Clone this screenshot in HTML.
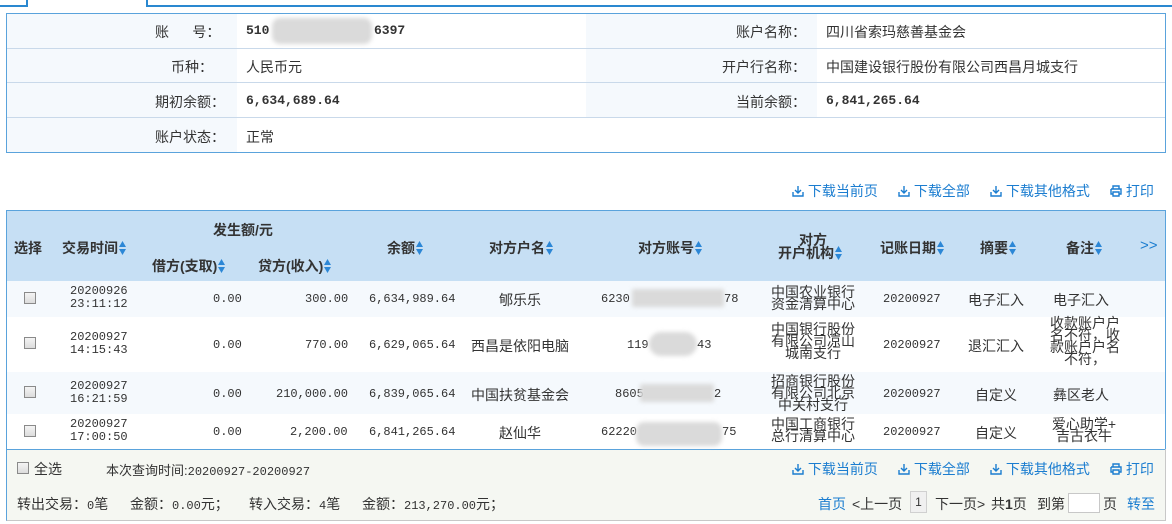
<!DOCTYPE html>
<html><head><meta charset="utf-8"><style>
*{margin:0;padding:0;box-sizing:border-box}
body{width:1172px;height:524px;background:#fff;position:relative;overflow:hidden;font-family:"Liberation Sans","Noto Sans CJK SC",sans-serif;font-size:14px;color:#333}
.a{position:absolute;white-space:nowrap}
.m{font-family:"Liberation Mono","Noto Sans CJK SC",monospace;font-size:12px}
.mb{font-family:"Liberation Mono",monospace;font-size:13px;font-weight:bold}
.b{font-weight:bold}
.lk{color:#1b7dd0}
.blur{position:absolute;background:#dadada;border-radius:8px;filter:blur(2px)}
.cb{position:absolute;width:12px;height:12px;border:1px solid #8a8a8a;background:linear-gradient(#f4f4f4,#dcdcdc)}
.t2{line-height:12px;text-align:center;font-size:14px}
.sa{display:inline-block;width:7px;height:14px;vertical-align:-2px;margin-left:1px}
</style></head><body>
<div class="a" style="left:0;top:5px;width:27px;height:2px;background:#2a88d0"></div>
<div class="a" style="left:26px;top:0;width:2px;height:7px;background:#2a88d0"></div>
<div class="a" style="left:146px;top:0;width:2px;height:7px;background:#2a88d0"></div>
<div class="a" style="left:146px;top:5px;width:1026px;height:2px;background:#2a88d0"></div>
<div class="a" style="left:6px;top:13px;width:1160px;height:140px;border:1px solid #5aa3dc"></div>
<div class="a" style="left:7px;top:14px;width:230px;height:138px;background:#f5f9fd"></div>
<div class="a" style="left:586px;top:14px;width:231px;height:104px;background:#f5f9fd"></div>
<div class="a" style="left:7px;top:48px;width:1158px;height:1px;background:#c9d9ea"></div>
<div class="a" style="left:7px;top:82px;width:1158px;height:1px;background:#c9d9ea"></div>
<div class="a" style="left:7px;top:117px;width:1158px;height:1px;background:#c9d9ea"></div>
<div class="a" style="left:155px;top:22px">账&nbsp;&nbsp;&nbsp;&nbsp;&nbsp;&nbsp;号：</div>
<div class="a mb" style="left:246px;top:23px">510</div>
<div class="blur" style="left:272px;top:18px;width:100px;height:26px"></div>
<div class="a mb" style="left:374px;top:23px">6397</div>
<div class="a" style="left:171px;top:57px">币种：</div>
<div class="a" style="left:246px;top:57px">人民币元</div>
<div class="a" style="left:155px;top:92px">期初余额：</div>
<div class="a mb" style="left:246px;top:93px">6,634,689.64</div>
<div class="a" style="left:155px;top:127px">账户状态：</div>
<div class="a" style="left:246px;top:127px">正常</div>
<div class="a" style="left:736px;top:22px">账户名称：</div>
<div class="a" style="left:826px;top:22px">四川省索玛慈善基金会</div>
<div class="a" style="left:722px;top:57px">开户行名称：</div>
<div class="a" style="left:826px;top:57px">中国建设银行股份有限公司西昌月城支行</div>
<div class="a" style="left:736px;top:92px">当前余额：</div>
<div class="a mb" style="left:826px;top:93px">6,841,265.64</div>

<svg width="0" height="0" style="position:absolute"><defs>
<g id="dl"><path d="M6 1v7M3 5l3 3 3-3M1 7v4h10V7" fill="none" stroke="#1b7dd0" stroke-width="1.4"/></g>
<g id="pr"><path d="M3 4V1h6v3M1 4h10v5H9M3 9H1V4M3 7h6v4H3z" fill="none" stroke="#1b7dd0" stroke-width="1.4"/></g>
<g id="ar"><path d="M3.5 0L7 6H0z M3.5 14L0 8h7z" fill="#2c87d6"/></g>
</defs></svg>
<div class="a lk" style="left:792px;top:181px"><svg width="12" height="12" style="vertical-align:-1px"><use href="#dl"/></svg> 下载当前页</div>
<div class="a lk" style="left:898px;top:181px"><svg width="12" height="12" style="vertical-align:-1px"><use href="#dl"/></svg> 下载全部</div>
<div class="a lk" style="left:990px;top:181px"><svg width="12" height="12" style="vertical-align:-1px"><use href="#dl"/></svg> 下载其他格式</div>
<div class="a lk" style="left:1110px;top:181px"><svg width="12" height="12" style="vertical-align:-1px"><use href="#pr"/></svg> 打印</div>

<div class="a" style="left:6px;top:210px;width:1160px;height:311px;border:1px solid #5aa3dc;border-bottom-color:#c8c8c8"></div>
<div class="a" style="left:7px;top:211px;width:1158px;height:70px;background:#c6dff4"></div>
<div class="a" style="left:7px;top:281px;width:1158px;height:36px;background:#f5f9fd"></div>
<div class="a" style="left:7px;top:372px;width:1158px;height:42px;background:#f5f9fd"></div>
<div class="a" style="left:7px;top:449px;width:1158px;height:71px;background:#f5f7f2;border-top:1px solid #5aa3dc"></div>
<div class="a" style="left:1165px;top:449px;width:1px;height:72px;background:#c8c8c8"></div>

<div class="a b" style="left:14px;top:238px">选择</div>
<div class="a b" style="left:62px;top:238px">交易时间<svg class="sa"><use href="#ar"/></svg></div>
<div class="a b" style="left:213px;top:220px">发生额/元</div>
<div class="a b" style="left:152px;top:256px">借方(支取)<svg class="sa"><use href="#ar"/></svg></div>
<div class="a b" style="left:258px;top:256px">贷方(收入)<svg class="sa"><use href="#ar"/></svg></div>
<div class="a b" style="left:387px;top:238px">余额<svg class="sa"><use href="#ar"/></svg></div>
<div class="a b" style="left:489px;top:238px">对方户名<svg class="sa"><use href="#ar"/></svg></div>
<div class="a b" style="left:638px;top:238px">对方账号<svg class="sa"><use href="#ar"/></svg></div>
<div class="a b" style="left:799px;top:233px;line-height:14px">对方</div>
<div class="a b" style="left:778px;top:246px;line-height:14px">开户机构<svg class="sa"><use href="#ar"/></svg></div>
<div class="a b" style="left:880px;top:238px">记账日期<svg class="sa"><use href="#ar"/></svg></div>
<div class="a b" style="left:980px;top:238px">摘要<svg class="sa"><use href="#ar"/></svg></div>
<div class="a b" style="left:1066px;top:238px">备注<svg class="sa"><use href="#ar"/></svg></div>
<div class="a lk" style="left:1140px;top:237px;font-size:15px">&gt;&gt;</div>

<div class="cb" style="left:24px;top:292px"></div>
<div class="a m" style="left:70px;top:285px;line-height:13px">20200926<br>23:11:12</div>
<div class="a m" style="left:213px;top:292px">0.00</div>
<div class="a m" style="left:305px;top:292px">300.00</div>
<div class="a m" style="left:369px;top:292px">6,634,989.64</div>
<div class="a" style="left:499px;top:290px">郇乐乐</div>
<div class="a m" style="left:601px;top:292px">6230</div>
<div class="blur" style="left:632px;top:289px;width:92px;height:18px;border-radius:2px"></div>
<div class="a m" style="left:724px;top:292px">78</div>
<div class="a t2" style="left:765px;top:286px;width:96px">中国农业银行<br>资金清算中心</div>
<div class="a m" style="left:883px;top:292px">20200927</div>
<div class="a" style="left:968px;top:290px">电子汇入</div>
<div class="a" style="left:1053px;top:290px">电子汇入</div>

<div class="cb" style="left:24px;top:337px"></div>
<div class="a m" style="left:70px;top:331px;line-height:13px">20200927<br>14:15:43</div>
<div class="a m" style="left:213px;top:338px">0.00</div>
<div class="a m" style="left:305px;top:338px">770.00</div>
<div class="a m" style="left:369px;top:338px">6,629,065.64</div>
<div class="a" style="left:471px;top:336px">西昌是依阳电脑</div>
<div class="a m" style="left:627px;top:338px">119</div>
<div class="blur" style="left:649px;top:332px;width:48px;height:24px;border-radius:12px"></div>
<div class="a m" style="left:697px;top:338px">43</div>
<div class="a t2" style="left:765px;top:323px;width:96px">中国银行股份<br>有限公司凉山<br>城南支行</div>
<div class="a m" style="left:883px;top:338px">20200927</div>
<div class="a" style="left:968px;top:336px">退汇汇入</div>
<div class="a t2" style="left:1046px;top:317px;width:78px">收款账户户<br>名不符，收<br>款账户户名<br>不符，</div>

<div class="cb" style="left:24px;top:386px"></div>
<div class="a m" style="left:70px;top:380px;line-height:13px">20200927<br>16:21:59</div>
<div class="a m" style="left:213px;top:387px">0.00</div>
<div class="a m" style="left:276px;top:387px">210,000.00</div>
<div class="a m" style="left:369px;top:387px">6,839,065.64</div>
<div class="a" style="left:471px;top:385px">中国扶贫基金会</div>
<div class="a m" style="left:615px;top:387px">8605</div>
<div class="blur" style="left:640px;top:384px;width:74px;height:18px;border-radius:2px"></div>
<div class="a m" style="left:714px;top:387px">2</div>
<div class="a t2" style="left:765px;top:375px;width:96px">招商银行股份<br>有限公司北京<br>中关村支行</div>
<div class="a m" style="left:883px;top:387px">20200927</div>
<div class="a" style="left:975px;top:385px">自定义</div>
<div class="a" style="left:1053px;top:385px">彝区老人</div>

<div class="cb" style="left:24px;top:425px"></div>
<div class="a m" style="left:70px;top:418px;line-height:13px">20200927<br>17:00:50</div>
<div class="a m" style="left:213px;top:425px">0.00</div>
<div class="a m" style="left:290px;top:425px">2,200.00</div>
<div class="a m" style="left:369px;top:425px">6,841,265.64</div>
<div class="a" style="left:499px;top:423px">赵仙华</div>
<div class="a m" style="left:601px;top:425px">62220</div>
<div class="blur" style="left:636px;top:422px;width:86px;height:24px;border-radius:8px"></div>
<div class="a m" style="left:722px;top:425px">75</div>
<div class="a t2" style="left:765px;top:418px;width:96px">中国工商银行<br>总行清算中心</div>
<div class="a m" style="left:883px;top:425px">20200927</div>
<div class="a" style="left:975px;top:423px">自定义</div>
<div class="a t2" style="left:1048px;top:418px;width:72px">爱心助学+<br>吉古衣牛</div>

<div class="cb" style="left:17px;top:462px"></div>
<div class="a" style="left:34px;top:459px">全选</div>
<div class="a" style="left:106px;top:460px;font-size:13px">本次查询时间:<span class="m">20200927-20200927</span></div>
<div class="a lk" style="left:792px;top:459px"><svg width="12" height="12" style="vertical-align:-1px"><use href="#dl"/></svg> 下载当前页</div>
<div class="a lk" style="left:898px;top:459px"><svg width="12" height="12" style="vertical-align:-1px"><use href="#dl"/></svg> 下载全部</div>
<div class="a lk" style="left:990px;top:459px"><svg width="12" height="12" style="vertical-align:-1px"><use href="#dl"/></svg> 下载其他格式</div>
<div class="a lk" style="left:1110px;top:459px"><svg width="12" height="12" style="vertical-align:-1px"><use href="#pr"/></svg> 打印</div>
<div class="a" style="left:17px;top:494px">转出交易：<span class="m">0</span>笔</div>
<div class="a" style="left:130px;top:494px">金额：<span class="m">0.00</span>元；</div>
<div class="a" style="left:249px;top:494px">转入交易：<span class="m">4</span>笔</div>
<div class="a" style="left:362px;top:494px">金额：<span class="m">213,270.00</span>元；</div>
<div class="a lk" style="left:818px;top:494px">首页</div>
<div class="a" style="left:852px;top:494px">&lt;上一页</div>
<div class="a" style="left:910px;top:491px;width:17px;height:22px;border:1px solid #d0d0d0;background:#f0f0f0;text-align:center;line-height:20px;font-size:12px">1</div>
<div class="a" style="left:935px;top:494px">下一页&gt;</div>
<div class="a" style="left:991px;top:494px">共<b>1</b>页</div>
<div class="a" style="left:1037px;top:494px">到第</div>
<div class="a" style="left:1068px;top:493px;width:32px;height:20px;border:1px solid #c8c8c8;background:#fff"></div>
<div class="a" style="left:1103px;top:494px">页</div>
<div class="a lk" style="left:1127px;top:494px">转至</div>
</body></html>
